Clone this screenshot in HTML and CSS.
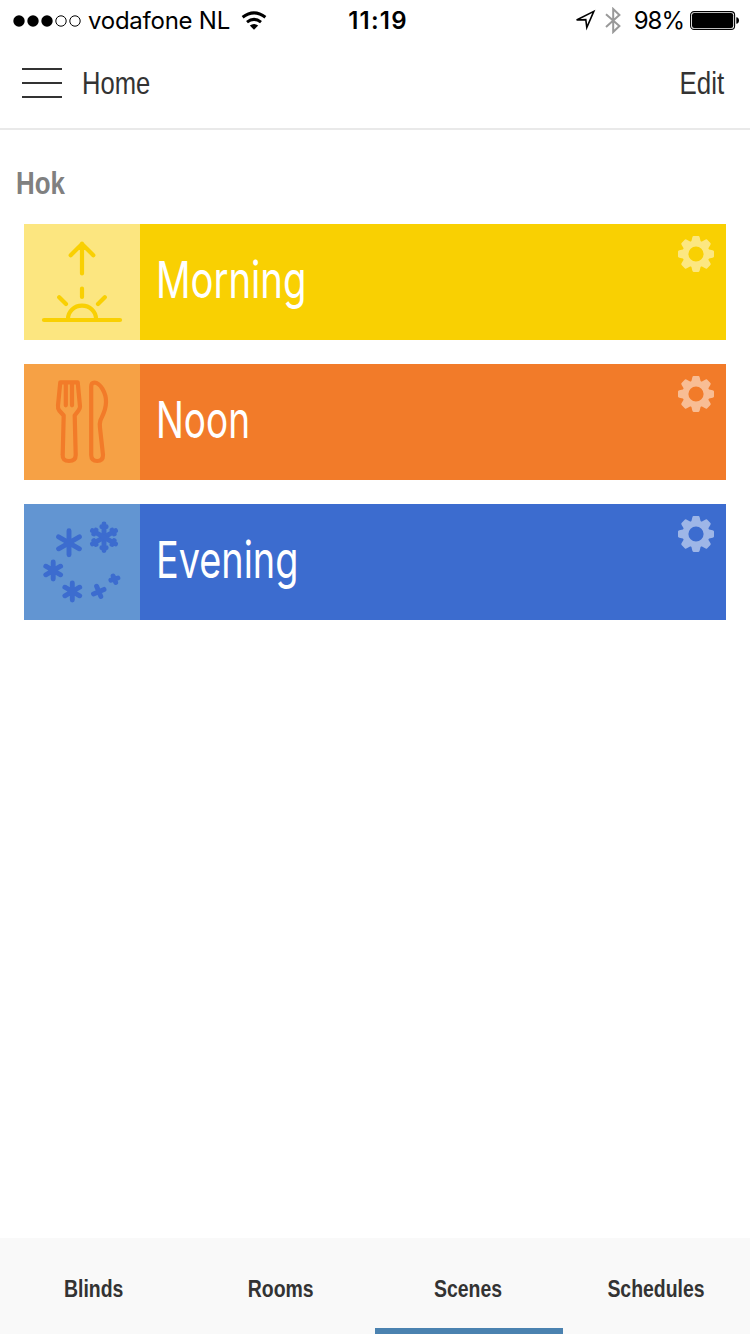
FILE: index.html
```
<!DOCTYPE html>
<html lang="en">
<head>
<meta charset="utf-8">
<title>Scenes</title>
<link rel="stylesheet" href="styles.css">
</head>
<body>
<svg class="defs" width="0" height="0">
  <symbol id="gear" viewBox="-18 -18 36 36">
    <circle r="10.6" fill="none" stroke="currentColor" stroke-width="6"/>
    <g id="teeth" fill="currentColor">
      <path id="tooth" d="M-4.8-12L-3.7-16.6Q-3.4-18-2.4-18H2.4Q3.4-18 3.7-16.6L4.8-12Z"/>
      <use href="#tooth" transform="rotate(45)"/><use href="#tooth" transform="rotate(90)"/>
      <use href="#tooth" transform="rotate(135)"/><use href="#tooth" transform="rotate(180)"/>
      <use href="#tooth" transform="rotate(225)"/><use href="#tooth" transform="rotate(270)"/>
      <use href="#tooth" transform="rotate(315)"/>
    </g>
  </symbol>
</svg>
<div class="screen">
  <div class="status">
    <div class="status-left">
      <svg class="signal" width="68" height="12" viewBox="0 0 68 12">
        <circle cx="6" cy="6" r="5.7"/><circle cx="20" cy="6" r="5.7"/><circle cx="34" cy="6" r="5.7"/>
        <g fill="none" stroke="#000"><circle cx="48" cy="6" r="5.2"/><circle cx="62" cy="6" r="5.2"/></g>
      </svg>
      <span class="carrier">vodafone NL</span>
      <svg class="wifi" width="26" height="20" viewBox="0 0 26 20">
        <g fill="none" stroke="#000" stroke-width="3">
          <path d="M1.6 6.3Q13-2.5 24.4 6.3"/><path d="M6 11.2Q13 5.6 20 11.2"/>
        </g>
        <path d="M8.8 14.6Q13 11.4 17.2 14.6L13 18.8Z"/>
      </svg>
    </div>
    <time class="clock">11:19</time>
    <div class="status-right">
      <svg class="location" width="22" height="22" viewBox="0 0 22 22"><path d="M2.6 11L19.8 2.4L12.8 18.6L11.8 10.6Z" fill="none" stroke="#000" stroke-width="1.6"/></svg>
      <svg class="bluetooth" width="16" height="27" viewBox="0 0 16 27"><path d="M1 7.2L14.4 19L8.2 25V2L14.4 8L1 20" fill="none" stroke="#999" stroke-width="2"/></svg>
      <span class="percent">98%</span>
      <svg class="battery" width="50" height="20" viewBox="0 0 50 20">
        <rect x=".6" y=".6" width="44" height="17.8" rx="3.5" fill="none" stroke="#000" stroke-width="1.1"/>
        <rect x="2" y="2" width="41.2" height="15" rx="2.2"/><path d="M46.3 6.2Q49 6.5 49 9.5T46.3 12.8Z"/>
      </svg>
    </div>
  </div>
  <header class="nav">
    <div class="menu"><i></i><i></i><i></i></div>
    <h1 class="condensed home">Home</h1>
    <span class="condensed edit">Edit</span>
  </header>
  <main class="content">
    <h2 class="condensed room">Hok</h2>
    <ul class="scenes">
      <li class="scene morning">
        <div class="tile"><svg width="116" height="116" viewBox="0 0 116 116">
          <path d="M58 49.5V19.5M46.7 31.2L58 19.9L69.3 31.2M58 64.5V73M35.2 73.2L42 80M80.8 73.2L74 80M20 96H96M44 96V95A14 13.3 0 0 1 72 95V96"/>
        </svg></div>
        <span class="name">Morning</span>
        <svg class="gear" width="36" height="36"><use href="#gear"/></svg>
      </li>
      <li class="scene noon">
        <div class="tile"><svg width="116" height="116" viewBox="0 0 116 116">
          <path d="M36.3 18.3H53.7L56 42.5Q56 44.5 54.5 46.5L50.7 51.5L51.7 91Q51.7 97 45 97T38.7 91L39.7 51.5L35.2 46.5Q33.7 44.5 34 41.5ZM41.8 19V41.3M48 19V41.3"/>
          <path d="M67.2 91V22.5Q67.2 18.5 70.5 18.5C76 18.7 82.3 29 82 38C82 47 77.6 53 76.4 56.5Q75.4 59.5 76 64L79 91Q79 97 73.2 97T67.2 91Z"/>
        </svg></div>
        <span class="name">Noon</span>
        <svg class="gear" width="36" height="36"><use href="#gear"/></svg>
      </li>
      <li class="scene evening">
        <div class="tile"><svg width="116" height="116" viewBox="0 0 116 116">
          <path d="M45 26.8V50.8M34.6 32.8L55.4 44.8M34.6 44.8L55.4 32.8"/>
          <path d="M29.2 58V75M21.8 62.2L36.6 70.8M21.8 70.8L36.6 62.2"/>
          <path d="M48.3 79V96M40.9 83.2L55.7 91.8M40.9 91.8L55.7 83.2"/>
          <path d="M72.6 82.3L76.8 92.4M69.5 89.9L80 85.4"/>
          <path d="M89.1 72L91.7 78.4M86.9 76.2L93.9 74"/>
          <g transform="translate(80 33.3)">
            <g id="arms"><path d="M0-13.3V13.3M-2.2-10.5H2.2M-2.2 10.5H2.2"/></g>
            <use href="#arms" transform="rotate(60)"/><use href="#arms" transform="rotate(120)"/>
          </g>
        </svg></div>
        <span class="name">Evening</span>
        <svg class="gear" width="36" height="36"><use href="#gear"/></svg>
      </li>
    </ul>
  </main>
  <nav class="tabs">
    <a class="tab"><span class="condensed">Blinds</span></a>
    <a class="tab"><span class="condensed">Rooms</span></a>
    <a class="tab active"><span class="condensed">Scenes</span></a>
    <a class="tab"><span class="condensed">Schedules</span></a>
  </nav>
</div>
</body>
</html>
```
FILE: styles.css
```
* { box-sizing: border-box; margin: 0; padding: 0; }
body { background: #fff; }
svg { display: block; flex: none; }
.defs { position: absolute; }
.screen { width: 750px; height: 1334px; display: flex; flex-direction: column; overflow: hidden; font-family: "Liberation Sans", Arial, sans-serif; color: #333; }
.condensed { display: block; transform: scaleX(.81); transform-origin: left; white-space: nowrap; }

.status { height: 42px; display: grid; grid-template-columns: 1fr auto 1fr; align-items: center; padding: 0 10px 0 13px; font: 400 24px/42px Inter, sans-serif; color: #000; }
.status-left, .status-right { display: flex; align-items: center; }
.status-right { justify-content: flex-end; }
.carrier { margin-left: 7px; letter-spacing: -.25px; }
.wifi { margin-left: 11px; }
.wifi, .signal, .battery { margin-bottom: 1px; }
.clock { font-weight: 600; letter-spacing: 1.2px; padding-left: 3px; }
.location { margin-bottom: 3px; }
.bluetooth { margin: 0 0 2px 9px; }
.percent { margin: 0 6px 0 13px; letter-spacing: -1px; }

.nav { height: 88px; display: flex; align-items: center; padding: 0 0 4px 22px; border-bottom: 2px solid #e9e9e9; font-size: 32px; }
.menu { width: 40px; height: 30px; display: flex; flex-direction: column; justify-content: space-between; }
.menu i { height: 2px; background: #333; }
.home { margin-left: 20px; font-size: 32px; font-weight: 400; transform: scaleX(.8); }
.edit { margin-left: auto; margin-right: 26px; transform-origin: right; }

.content { flex: 1; padding: 30px 24px 0; }
.room { margin: 0 0 18px -8px; font-size: 32px; line-height: 46px; color: #808080; }
.scenes { list-style: none; display: flex; flex-direction: column; gap: 24px; }
.scene { height: 116px; display: flex; color: #fff; }
.tile { width: 116px; height: 116px; }
.tile path { fill: none; stroke-width: 4.2; stroke-linecap: round; stroke-linejoin: round; }
.name { flex: 1; padding-left: 16px; font: 400 51px/112px Inter, sans-serif; transform: scaleX(.75); transform-origin: 16px; }
.noon .name { transform: scaleX(.725); }
.evening .name { transform: scaleX(.742); }
.gear { margin: 12px 12px 0 0; opacity: .5; }
.morning { background: #f9d002; }
.morning .tile { background: #fce680; stroke: #f9d002; }
.noon { background: #f27b29; }
.noon .tile { background: #f6a145; stroke: #f27b29; }
.evening { background: #3c6ccf; }
.evening .tile { background: #6295d2; stroke: #3c6ccf; }
.evening .tile path { stroke-width: 4.9; }

.tabs { height: 96px; display: grid; grid-template-columns: repeat(4, 1fr); background: #f9f9f9; }
.tab { display: flex; align-items: center; justify-content: center; padding: 12px 1px 0 0; border-bottom: 6px solid transparent; font-size: 24px; font-weight: 700; }
.tab .condensed { transform-origin: center; }
.active { border-bottom-color: #4b82b0; }
```
